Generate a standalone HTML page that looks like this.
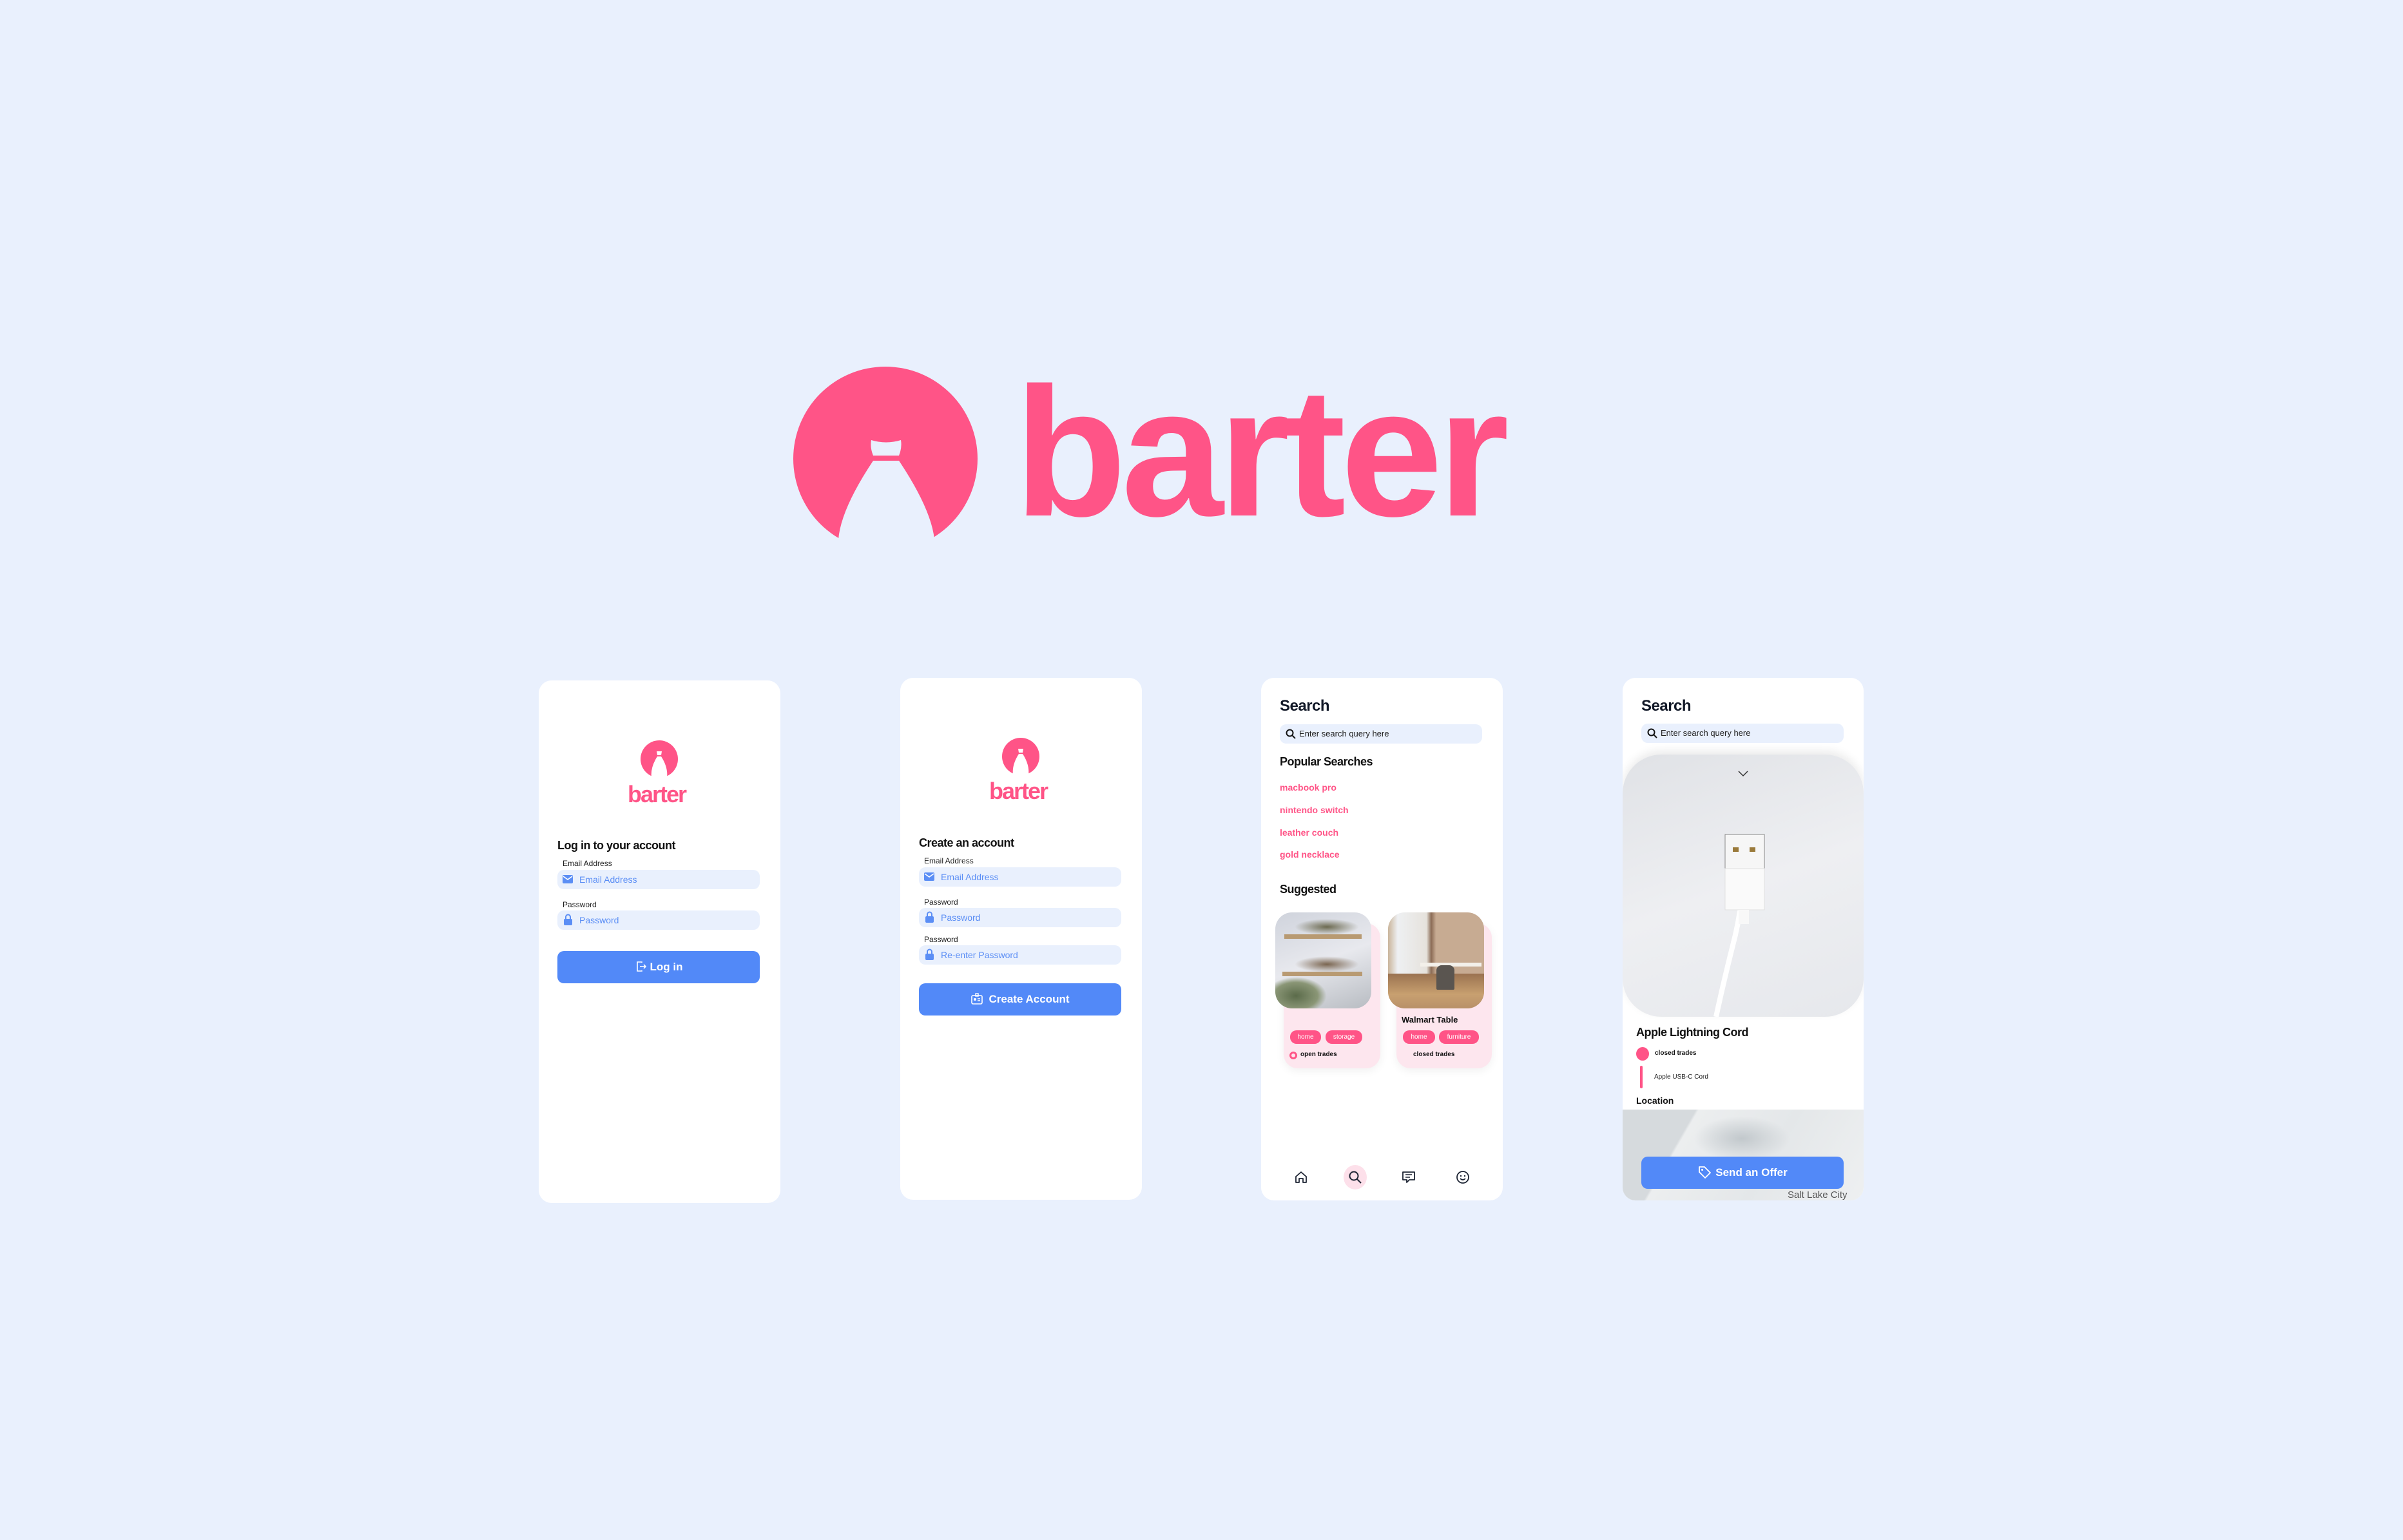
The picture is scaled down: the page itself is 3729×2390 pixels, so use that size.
<!DOCTYPE html>
<html><head><meta charset="utf-8"><style>
*{margin:0;padding:0;box-sizing:border-box}
body{width:3729px;height:2390px;background:#e9f0fd;position:relative;overflow:hidden;font-family:"Liberation Sans",sans-serif}
.a{position:absolute}
.ph{position:absolute;background:#fff;border-radius:20px}
.lbl{position:absolute;font-size:12px;color:#222}
.inp{position:absolute;background:#e9f0fd;border-radius:10px;height:30px;color:#5b8ef5;font-size:14px;line-height:30px;padding-left:34px}
.btn{position:absolute;background:#5289f8;border-radius:10px;color:#fff;font-weight:bold;font-size:17px;text-align:center}
.h{position:absolute;font-weight:bold;color:#111}
.pk{position:absolute;color:#ff5487;font-size:14px;font-weight:bold}
.tag{position:absolute;background:#ff5487;color:#fff;font-size:10px;height:21px;line-height:21px;border-radius:10px;text-align:center}
</style></head><body>

<!-- big logo -->
<svg class="a" style="left:1220px;top:560px" width="310" height="290" viewBox="1220 560 310 290">
<circle cx="1374" cy="712" r="143" fill="#ff5487"/>
<path d="M1352 683 Q1375 690 1398 683 Q1400 695 1395 707 L1355 707 Q1350 695 1352 683Z" fill="#e9f0fd"/>
<path d="M1355 715 L1395 715 Q1445 790 1450 837 L1460 860 L1290 860 L1301 837 Q1305 790 1355 715Z" fill="#e9f0fd"/>
</svg>
<div class="a" style="left:1574px;top:560px;font-size:285px;font-weight:bold;color:#ff5487;letter-spacing:-8px;line-height:1">barter</div>

<!-- phone 1 -->
<div class="ph" style="left:836px;top:1056px;width:375px;height:811px"></div>
<svg class="a" style="left:993px;top:1149px" width="60" height="58" viewBox="0 0 60 58"><circle cx="30" cy="29" r="29" fill="#ff5487"/><path d="M26 17 L34 17 L33 23 L27 23Z M27 25 L33 25 Q44 42 42 58 L18 58 Q16 42 27 25Z" fill="#fff"/></svg>
<div class="a" style="left:974px;top:1212px;font-size:36px;font-weight:bold;color:#ff5487;letter-spacing:-2px">barter</div>
<div class="h" style="left:865px;top:1302px;font-size:18px;letter-spacing:-0.5px">Log in to your account</div>
<div class="lbl" style="left:873px;top:1333px">Email Address</div>
<div class="inp" style="left:865px;top:1350px;width:314px">Email Address</div>
<svg class="a" style="left:873px;top:1358px" width="16" height="13"><rect width="16" height="13" rx="2" fill="#5b8ef5"/><path d="M1 2 L8 7 L15 2" stroke="#fff" stroke-width="1.6" fill="none"/></svg>
<div class="lbl" style="left:873px;top:1397px">Password</div>
<div class="inp" style="left:865px;top:1413px;width:314px">Password</div>
<svg class="a" style="left:875px;top:1418px" width="13" height="18"><path d="M3 8 V5 a3.5 3.5 0 0 1 7 0 V8" stroke="#5b8ef5" stroke-width="2" fill="none"/><rect y="8" width="13" height="10" rx="2" fill="#5b8ef5"/></svg>
<div class="btn" style="left:865px;top:1476px;width:314px;height:50px;line-height:50px"><svg width="20" height="20" viewBox="0 0 20 20" style="vertical-align:-4px;margin-right:4px"><path d="M11 4 V3 H4 V17 H11 V16" stroke="#fff" stroke-width="1.6" fill="none"/><path d="M8 10 H17 M14 7 L17 10 L14 13" stroke="#fff" stroke-width="1.6" fill="none"/></svg>Log in</div>

<!-- phone 2 -->
<div class="ph" style="left:1397px;top:1052px;width:375px;height:810px"></div>
<svg class="a" style="left:1554px;top:1145px" width="60" height="58" viewBox="0 0 60 58"><circle cx="30" cy="29" r="29" fill="#ff5487"/><path d="M26 17 L34 17 L33 23 L27 23Z M27 25 L33 25 Q44 42 42 58 L18 58 Q16 42 27 25Z" fill="#fff"/></svg>
<div class="a" style="left:1535px;top:1207px;font-size:36px;font-weight:bold;color:#ff5487;letter-spacing:-2px">barter</div>
<div class="h" style="left:1426px;top:1298px;font-size:18px;letter-spacing:-0.5px">Create an account</div>
<div class="lbl" style="left:1434px;top:1329px">Email Address</div>
<div class="inp" style="left:1426px;top:1346px;width:314px">Email Address</div>
<svg class="a" style="left:1434px;top:1354px" width="16" height="13"><rect width="16" height="13" rx="2" fill="#5b8ef5"/><path d="M1 2 L8 7 L15 2" stroke="#fff" stroke-width="1.6" fill="none"/></svg>
<div class="lbl" style="left:1434px;top:1393px">Password</div>
<div class="inp" style="left:1426px;top:1409px;width:314px">Password</div>
<svg class="a" style="left:1436px;top:1414px" width="13" height="18"><path d="M3 8 V5 a3.5 3.5 0 0 1 7 0 V8" stroke="#5b8ef5" stroke-width="2" fill="none"/><rect y="8" width="13" height="10" rx="2" fill="#5b8ef5"/></svg>
<div class="lbl" style="left:1434px;top:1451px">Password</div>
<div class="inp" style="left:1426px;top:1467px;width:314px">Re-enter Password</div>
<svg class="a" style="left:1436px;top:1472px" width="13" height="18"><path d="M3 8 V5 a3.5 3.5 0 0 1 7 0 V8" stroke="#5b8ef5" stroke-width="2" fill="none"/><rect y="8" width="13" height="10" rx="2" fill="#5b8ef5"/></svg>
<div class="btn" style="left:1426px;top:1526px;width:314px;height:50px;line-height:50px"><svg width="20" height="20" viewBox="0 0 20 20" style="vertical-align:-4px;margin-right:8px"><rect x="2" y="5" width="16" height="13" rx="2" stroke="#fff" stroke-width="1.6" fill="none"/><rect x="8" y="2" width="4" height="4" stroke="#fff" stroke-width="1.4" fill="none"/><circle cx="7" cy="11" r="2" fill="#fff"/><path d="M11 10 H15 M11 13 H15" stroke="#fff" stroke-width="1.4"/></svg>Create Account</div>

<!-- phone 3 -->
<div class="ph" style="left:1957px;top:1052px;width:375px;height:811px"></div>
<div class="h" style="left:1986px;top:1082px;font-size:24px;letter-spacing:-0.5px;color:#111827">Search</div>
<div class="inp" style="left:1986px;top:1124px;width:314px;color:#222;font-size:13px;padding-left:30px">Enter search query here</div>
<svg class="a" style="left:1995px;top:1131px" width="16" height="16"><circle cx="6.5" cy="6.5" r="5" stroke="#111" stroke-width="2" fill="none"/><path d="M10 10 L15 15" stroke="#111" stroke-width="2"/></svg>
<div class="h" style="left:1986px;top:1172px;font-size:18px;letter-spacing:-0.5px">Popular Searches</div>
<div class="pk" style="left:1986px;top:1214px">macbook pro</div>
<div class="pk" style="left:1986px;top:1249px">nintendo switch</div>
<div class="pk" style="left:1986px;top:1284px">leather couch</div>
<div class="pk" style="left:1986px;top:1318px">gold necklace</div>
<div class="h" style="left:1986px;top:1370px;font-size:18px;letter-spacing:-0.5px">Suggested</div>
<div class="a" style="left:1992px;top:1433px;width:150px;height:225px;background:#fde6ee;border-radius:22px;box-shadow:0 4px 14px rgba(0,0,0,0.06)"></div>
<div class="a" style="left:2167px;top:1433px;width:148px;height:225px;background:#fde6ee;border-radius:22px;box-shadow:0 4px 14px rgba(0,0,0,0.06)"></div>
<div class="a" style="left:1979px;top:1416px;width:149px;height:149px;border-radius:26px;overflow:hidden;background:linear-gradient(160deg,#cfd3dc,#e8e9ee 50%,#b8bcc2)">
 <div class="a" style="left:14px;top:34px;width:120px;height:7px;background:#b89a72"></div>
 <div class="a" style="left:11px;top:92px;width:124px;height:7px;background:#b89a72"></div>
 <div class="a" style="left:0;top:100px;width:80px;height:49px;background:radial-gradient(ellipse at 40% 60%,#5b6b4a,#8a9676 50%,transparent 70%)"></div>
 <div class="a" style="left:30px;top:10px;width:100px;height:25px;background:radial-gradient(ellipse,#6c6a50,transparent 70%)"></div>
 <div class="a" style="left:30px;top:68px;width:100px;height:25px;background:radial-gradient(ellipse,#7a6550,transparent 70%)"></div>
</div>
<div class="a" style="left:2154px;top:1416px;width:149px;height:149px;border-radius:26px;overflow:hidden;background:linear-gradient(90deg,#c9b49a 0%,#eef0f2 10%,#e6e2dc 40%,#8b6b55 45%,#c7ab92 50%,#c7ab92 100%)">
 <div class="a" style="left:0;top:95px;width:149px;height:54px;background:linear-gradient(180deg,#9a7250,#c8a070 60%,#b89068)"></div>
 <div class="a" style="left:50px;top:78px;width:95px;height:6px;background:#f3f0ea"></div>
 <div class="a" style="left:75px;top:82px;width:28px;height:38px;background:#5a5550;border-radius:8px 8px 2px 2px"></div>
</div>
<div class="a" style="left:2175px;top:1575px;font-size:13px;font-weight:bold;color:#111">Walmart Table</div>
<div class="tag" style="left:2002px;top:1599px;width:48px">home</div>
<div class="tag" style="left:2057px;top:1599px;width:57px">storage</div>
<div class="tag" style="left:2177px;top:1599px;width:50px">home</div>
<div class="tag" style="left:2233px;top:1599px;width:62px">furniture</div>
<div class="a" style="left:2001px;top:1632px;width:12px;height:12px;border:3px solid #ff5487;border-radius:50%"></div>
<div class="a" style="left:2018px;top:1631px;font-size:10px;font-weight:bold;color:#111">open trades</div>
<div class="a" style="left:2193px;top:1631px;font-size:10px;font-weight:bold;color:#111">closed trades</div>
<svg class="a" style="left:2008px;top:1816px" width="22" height="22" viewBox="0 0 22 22"><path d="M3 10 L11 3 L19 10 V19 H14 V13 H8 V19 H3Z" stroke="#1d2433" stroke-width="1.8" fill="none" stroke-linejoin="round"/></svg>
<div class="a" style="left:2085px;top:1808px;width:36px;height:38px;background:#fde0ea;border-radius:50%"></div>
<svg class="a" style="left:2092px;top:1816px" width="22" height="22"><circle cx="9" cy="9" r="6.5" stroke="#1d2433" stroke-width="2" fill="none"/><path d="M14 14 L20 20" stroke="#1d2433" stroke-width="2"/></svg>
<svg class="a" style="left:2175px;top:1816px" width="22" height="22"><path d="M2 3 H20 V15 H12 L8 19 V15 H2Z" stroke="#1d2433" stroke-width="1.8" fill="none" stroke-linejoin="round"/><path d="M6 7 H16 M6 11 H13" stroke="#1d2433" stroke-width="1.6"/></svg>
<svg class="a" style="left:2259px;top:1816px" width="22" height="22"><circle cx="11" cy="11" r="9" stroke="#1d2433" stroke-width="1.8" fill="none"/><circle cx="8" cy="9" r="1.2" fill="#1d2433"/><circle cx="14" cy="9" r="1.2" fill="#1d2433"/><path d="M7 13 Q11 17 15 13" stroke="#1d2433" stroke-width="1.6" fill="none"/></svg>

<!-- phone 4 -->
<div class="ph" style="left:2518px;top:1052px;width:374px;height:811px;overflow:hidden">
 <div class="a" style="left:0;top:119px;width:374px;height:407px;border-radius:60px;background:linear-gradient(160deg,#e0e2e6,#eeeff2 50%,#e6e8ec);box-shadow:0 -6px 14px rgba(0,0,0,0.08)">
  <svg class="a" style="left:0;top:0" width="374" height="407">
   <path d="M180 26 L187 33 L194 26" stroke="#333" stroke-width="1.5" fill="none"/>
   <path d="M188 182 Q186 240 170 300 Q155 360 145 407" stroke="#fff" stroke-width="8" fill="none"/>
   <rect x="159" y="124" width="61" height="53" fill="#f6f6f6" stroke="#888" stroke-width="1"/>
   <rect x="171" y="144" width="9" height="7" fill="#9a7a3a"/><rect x="197" y="144" width="9" height="7" fill="#9a7a3a"/>
   <rect x="159" y="177" width="61" height="64" fill="#fafafa" stroke="#e0e0e0"/>
   <rect x="180" y="241" width="16" height="22" fill="#f8f8f8"/>
  </svg>
 </div>
 <div class="a" style="left:0;top:670px;width:374px;height:141px;background:linear-gradient(120deg,#d6dadd 0%,#d6dadd 25%,#eceeef 26%,#e4e7e9 60%,#eef0f1 100%)">
  <div class="a" style="left:110px;top:10px;width:150px;height:70px;background:radial-gradient(ellipse,#c2c8cc,transparent 70%)"></div>
  <div class="a" style="left:256px;top:124px;font-size:15px;color:#555">Salt Lake City</div>
 </div>
</div>
<div class="h" style="left:2547px;top:1082px;font-size:24px;letter-spacing:-0.5px;color:#111827">Search</div>
<div class="inp" style="left:2547px;top:1123px;width:314px;color:#222;font-size:13px;padding-left:30px">Enter search query here</div>
<svg class="a" style="left:2556px;top:1130px" width="16" height="16"><circle cx="6.5" cy="6.5" r="5" stroke="#111" stroke-width="2" fill="none"/><path d="M10 10 L15 15" stroke="#111" stroke-width="2"/></svg>
<div class="h" style="left:2539px;top:1592px;font-size:18px;letter-spacing:-0.5px">Apple Lightning Cord</div>
<div class="a" style="left:2539px;top:1625px;width:20px;height:21px;background:#ff5487;border-radius:50%"></div>
<div class="a" style="left:2568px;top:1629px;font-size:10px;font-weight:bold;color:#111">closed trades</div>
<div class="a" style="left:2545px;top:1654px;width:4px;height:35px;background:#ff5487;border-radius:2px"></div>
<div class="a" style="left:2567px;top:1666px;font-size:10px;color:#222">Apple USB-C Cord</div>
<div class="h" style="left:2539px;top:1700px;font-size:14px">Location</div>
<div class="btn" style="left:2547px;top:1795px;width:314px;height:50px;line-height:50px;font-size:17px"><svg width="22" height="22" viewBox="0 0 22 22" style="vertical-align:-5px;margin-right:6px"><path d="M3 3 H11 L20 12 L12 20 L3 11Z" stroke="#fff" stroke-width="1.8" fill="none" stroke-linejoin="round"/><circle cx="7.5" cy="7.5" r="1.5" fill="#fff"/></svg>Send an Offer</div>
</body></html>
